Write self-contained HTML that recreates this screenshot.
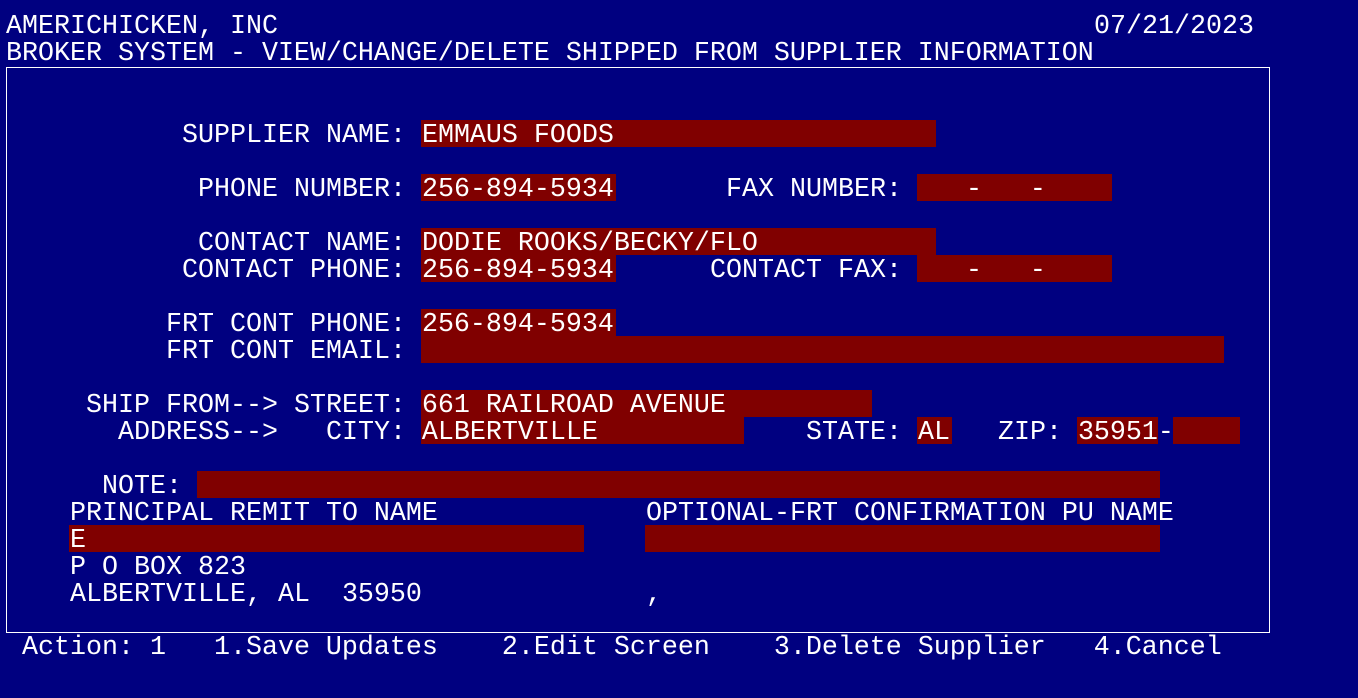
<!DOCTYPE html>
<html><head><meta charset="utf-8"><style>
html,body{margin:0;padding:0;background:#000080;width:1358px;height:698px;overflow:hidden}
body{position:relative;font-family:"Liberation Mono","DejaVu Sans Mono",monospace;font-size:26.67px;color:#fff}
.t{position:absolute;white-space:pre;line-height:27px;height:27px;margin-top:3px}
.b{position:absolute;background:#800000;height:27px}
#frame{position:absolute;left:6px;top:67px;width:1264px;height:566px;border:1px solid #fff;box-sizing:border-box}
</style></head><body>
<div id="frame"></div>
<div class="b" style="left:421px;top:120px;width:515px"></div>
<div class="b" style="left:421px;top:174px;width:195px"></div>
<div class="b" style="left:917px;top:174px;width:195px"></div>
<div class="b" style="left:421px;top:228px;width:515px"></div>
<div class="b" style="left:421px;top:255px;width:195px"></div>
<div class="b" style="left:917px;top:255px;width:195px"></div>
<div class="b" style="left:421px;top:309px;width:195px"></div>
<div class="b" style="left:421px;top:336px;width:803px"></div>
<div class="b" style="left:421px;top:390px;width:451px"></div>
<div class="b" style="left:421px;top:417px;width:323px"></div>
<div class="b" style="left:917px;top:417px;width:35px"></div>
<div class="b" style="left:1077px;top:417px;width:81px"></div>
<div class="b" style="left:1173px;top:417px;width:67px"></div>
<div class="b" style="left:197px;top:471px;width:963px"></div>
<div class="b" style="left:69px;top:525px;width:515px"></div>
<div class="b" style="left:645px;top:525px;width:515px"></div>
<div class="t" style="left:6px;top:11px">AMERICHICKEN, INC</div>
<div class="t" style="left:1094px;top:11px">07/21/2023</div>
<div class="t" style="left:6px;top:38px">BROKER SYSTEM - VIEW/CHANGE/DELETE SHIPPED FROM SUPPLIER INFORMATION</div>
<div class="t" style="left:182px;top:120px">SUPPLIER NAME: EMMAUS FOODS</div>
<div class="t" style="left:198px;top:174px">PHONE NUMBER: 256-894-5934</div>
<div class="t" style="left:726px;top:174px">FAX NUMBER:    -   -</div>
<div class="t" style="left:198px;top:228px">CONTACT NAME: DODIE ROOKS/BECKY/FLO</div>
<div class="t" style="left:182px;top:255px">CONTACT PHONE: 256-894-5934</div>
<div class="t" style="left:710px;top:255px">CONTACT FAX:    -   -</div>
<div class="t" style="left:166px;top:309px">FRT CONT PHONE: 256-894-5934</div>
<div class="t" style="left:166px;top:336px">FRT CONT EMAIL:</div>
<div class="t" style="left:86px;top:390px">SHIP FROM--> STREET: 661 RAILROAD AVENUE</div>
<div class="t" style="left:118px;top:417px">ADDRESS-->   CITY: ALBERTVILLE</div>
<div class="t" style="left:806px;top:417px">STATE: AL   ZIP: 35951-</div>
<div class="t" style="left:102px;top:471px">NOTE:</div>
<div class="t" style="left:70px;top:498px">PRINCIPAL REMIT TO NAME</div>
<div class="t" style="left:646px;top:498px">OPTIONAL-FRT CONFIRMATION PU NAME</div>
<div class="t" style="left:70px;top:525px">E</div>
<div class="t" style="left:70px;top:552px">P O BOX 823</div>
<div class="t" style="left:70px;top:579px">ALBERTVILLE, AL  35950</div>
<div class="t" style="left:646px;top:579px">,</div>
<div class="t" style="left:22px;top:632px">Action: 1   1.Save Updates    2.Edit Screen    3.Delete Supplier   4.Cancel</div>
</body></html>
